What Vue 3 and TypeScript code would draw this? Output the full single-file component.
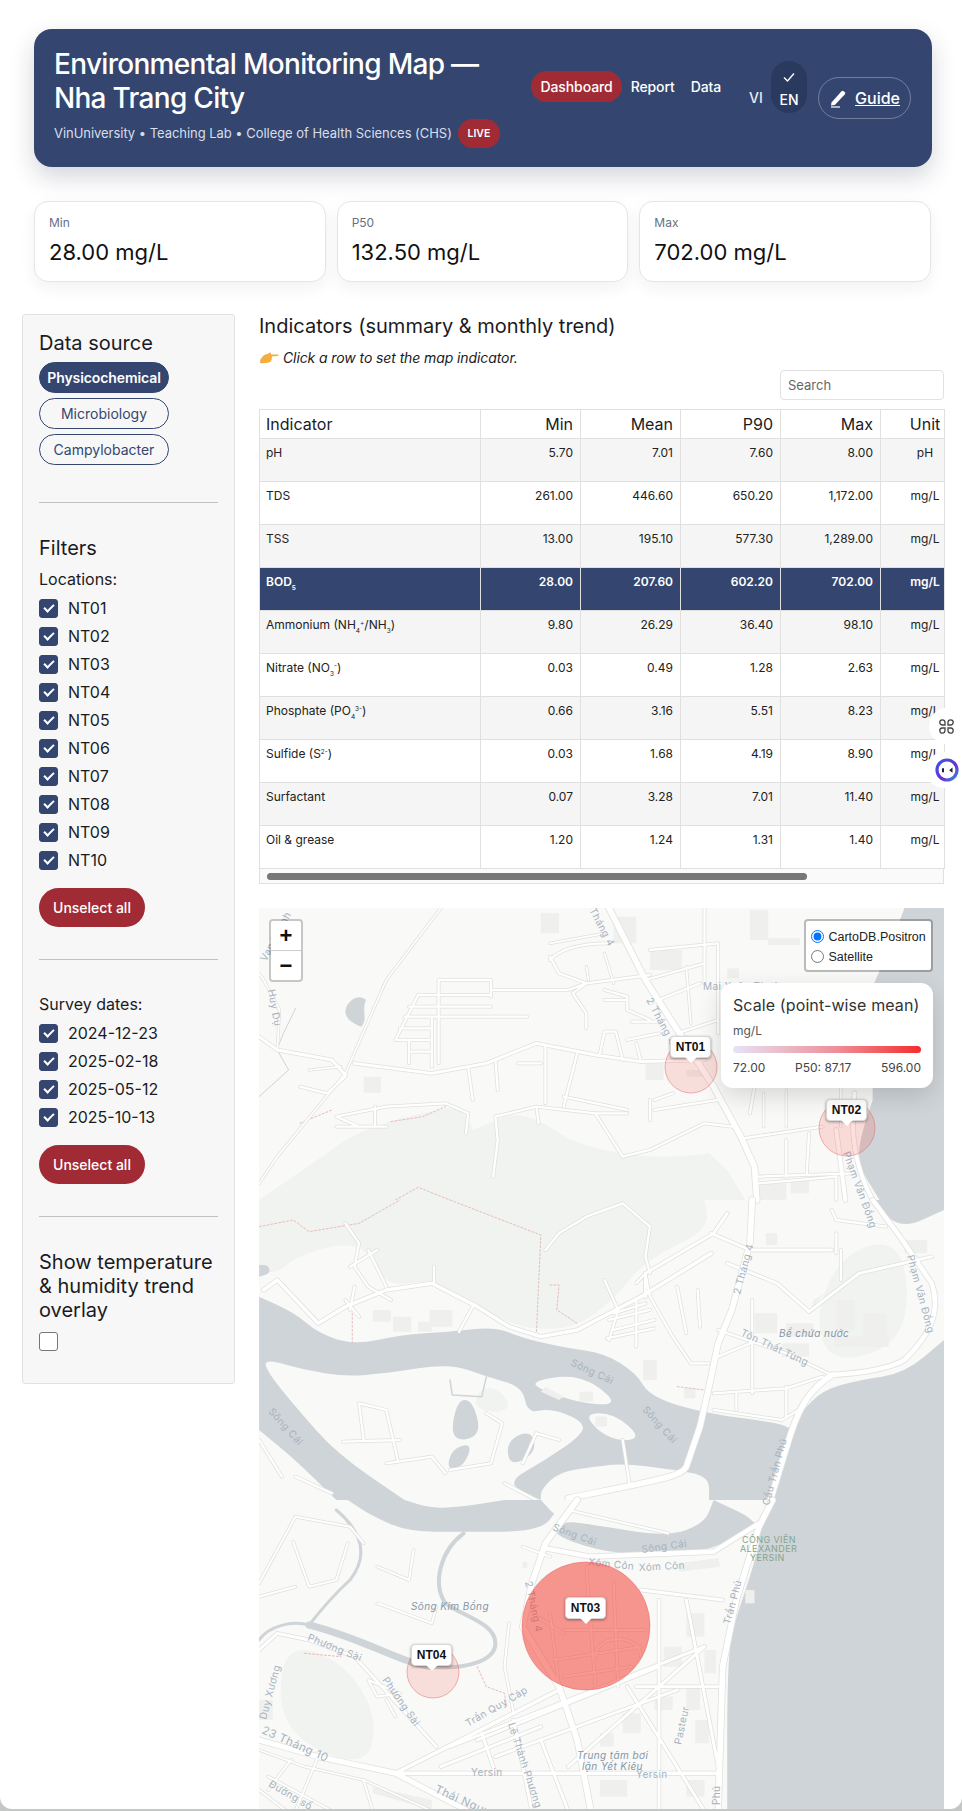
<template>
  <div class="page">
    <header class="hero">
      <div class="hero-left">
        <h1>Environmental Monitoring Map — Nha Trang City</h1>
        <div class="hero-sub">
          <span>VinUniversity • Teaching Lab • College of Health Sciences (CHS)</span>
          <span class="live">LIVE</span>
        </div>
      </div>
      <nav class="nav">
        <a class="nav-item active">Dashboard</a>
        <a class="nav-item">Report</a>
        <a class="nav-item">Data</a>
      </nav>
      <div class="lang">
        <span class="lang-vi">VI</span>
        <span class="lang-en">
          <svg width="14" height="14" viewBox="0 0 14 14" fill="none" stroke="#fff" stroke-width="1.4">
            <path d="M2 7.5 L5.5 11 L12 3.5" />
          </svg>
          <span>EN</span>
        </span>
      </div>
      <a class="guide">
        <svg width="20" height="20" viewBox="0 0 20 20">
          <path d="M2.5 14.5 L12.5 3.2 Q13.5 2.2 14.7 3.2 L15.8 4.3 Q16.6 5.4 15.7 6.4 L5.8 17 L2 17.6 Z" fill="#fff" />
          <path d="M2 19 H11" stroke="#fff" stroke-width="1.2" />
        </svg>
        <span>Guide</span>
      </a>
    </header>

    <section class="stats">
      <div v-for="s in stats" :key="s.label" class="stat">
        <div class="stat-label">{{ s.label }}</div>
        <div class="stat-value">{{ s.value }}</div>
      </div>
    </section>

    <div class="layout">
      <aside class="side">
        <h3>Data source</h3>
        <div class="sources">
          <button v-for="(src, i) in sources" :key="src" class="source" :class="{ on: i === 0 }">{{ src }}</button>
        </div>
        <hr class="first-rule" />
        <h3>Filters</h3>
        <div class="field-label">Locations:</div>
        <label v-for="loc in locations" :key="loc" class="check">
          <input type="checkbox" checked />
          <span>{{ loc }}</span>
        </label>
        <button class="unselect">Unselect all</button>
        <hr />
        <div class="field-label dates-label">Survey dates:</div>
        <label v-for="d in dates" :key="d" class="check">
          <input type="checkbox" checked />
          <span>{{ d }}</span>
        </label>
        <button class="unselect">Unselect all</button>
        <hr />
        <h3 class="overlay-title">Show temperature &amp; humidity trend overlay</h3>
        <input class="plain-check" type="checkbox" />
      </aside>

      <main class="content">
        <h2>Indicators (summary &amp; monthly trend)</h2>
        <p class="hint">
          <svg width="20" height="13" viewBox="0 0 20 13">
            <path d="M1 9 L4.5 4.5 Q6 3 8.5 3 L11 1.5 Q12.5 1.5 12 3.4 L19.5 3.6 Q20 4.6 19 5 L13 5.4 L12.6 9 Q12 11.5 9 11.8 L3.5 12.2 Z" fill="#f4ae3c" />
            <path d="M1 9 L3.5 12.2 L1.6 12 Z" fill="#e58f25" />
          </svg>
          <em>Click a row to set the map indicator.</em>
        </p>
        <div class="search-row"><input class="search" placeholder="Search" /></div>

        <div class="table-wrap">
          <table>
            <colgroup>
              <col style="width: 221px" />
              <col v-for="n in 4" :key="n" style="width: 100px" />
              <col style="width: 64px" />
            </colgroup>
            <thead>
              <tr>
                <th class="name">Indicator</th>
                <th>Min</th>
                <th>Mean</th>
                <th>P90</th>
                <th>Max</th>
                <th>Unit</th>
              </tr>
            </thead>
            <tbody>
              <tr v-for="(r, i) in rows" :key="i" :class="{ odd: i % 2 === 0, selected: r.selected }">
                <td class="name" v-html="r.name"></td>
                <td>{{ r.min }}</td>
                <td>{{ r.mean }}</td>
                <td>{{ r.p90 }}</td>
                <td>{{ r.max }}</td>
                <td>{{ r.unit }}</td>
              </tr>
            </tbody>
          </table>
          <div class="scroll-track"><div class="scroll-thumb"></div></div>
        </div>

        <div class="map">
          <svg class="map-svg" width="685" height="901" viewBox="259 908 685 901">
            <rect x="259" y="908" width="685" height="901" fill="#f9f9f8" />
            <g v-for="sec in sections" :key="sec.y" :transform="`translate(250 ${sec.y}) scale(0.4545 0.3333)`">
              <path v-for="(d, i) in sec.parks" :key="'p' + i" :d="smooth(d)" fill="#f0f3f0" />
              <path v-for="(d, i) in sec.water" :key="'w' + i" :d="smooth(d)" fill="#cfd4d8" />
              <path v-for="(d, i) in sec.land" :key="'l' + i" :d="smooth(d)" fill="#f9f9f8" />
              <path v-for="(d, i) in sec.ponds" :key="'o' + i" :d="smooth(d)" fill="#cfd4d8" />
              <path v-for="(d, i) in sec.greens" :key="'g' + i" :d="smooth(d)" fill="#f0f3f0" />
              <path v-for="(r, i) in sec.streams" :key="'s' + i" :d="r.d" class="line" stroke="#cfd4d8" :stroke-width="r.w" />
              <path v-for="(d, i) in sec.blocks" :key="'b' + i" :d="d" fill="#efefed" />
              <path v-for="(d, i) in sec.dotted" :key="'t' + i" :d="d" class="line" stroke="#e8bcbc" stroke-width="1" stroke-dasharray="2 2" />
              <path v-for="(r, i) in sec.roads" :key="'c' + i" :d="r.d" class="line" stroke="#e0e0de" :stroke-width="r.w * 1.15 + 1.5" />
              <path v-for="(r, i) in sec.roads" :key="'r' + i" :d="r.d" class="line" stroke="#ffffff" :stroke-width="r.w * 1.15" />
            </g>
            <text
              v-for="l in labels"
              :key="l.t + l.x"
              class="map-label"
              :class="l.cls"
              :transform="`translate(${l.x} ${l.y}) rotate(${l.r ?? 0})`"
            >{{ l.t }}</text>
            <circle
              v-for="m in markers"
              :key="m.id"
              :cx="m.cx"
              :cy="m.cy"
              :r="m.r"
              fill="#f44336"
              :fill-opacity="m.alpha"
              stroke="#e06666"
              stroke-opacity="0.7"
              stroke-width="0.7"
            />
          </svg>

          <div
            v-for="m in markers"
            :key="m.id"
            class="tip"
            :style="{ left: m.tx - 259 + 'px', top: m.ty - 908 + 'px' }"
          >{{ m.id }}</div>

          <div class="zoom-ctl">
            <a>+</a>
            <a>−</a>
          </div>
          <div class="layers">
            <label><input type="radio" name="base" checked /> CartoDB.Positron</label>
            <label><input type="radio" name="base" /> Satellite</label>
          </div>
          <div class="legend">
            <div class="legend-title">Scale (point-wise mean)</div>
            <div class="legend-unit">mg/L</div>
            <div class="legend-bar"></div>
            <div class="legend-scale">
              <span>72.00</span>
              <span>P50: 87.17</span>
              <span>596.00</span>
            </div>
          </div>
        </div>
      </main>
    </div>

    <div class="float-btn float-cmd">
      <svg width="17" height="17" viewBox="0 0 17 17" fill="none" stroke="#444" stroke-width="1.3">
        <path d="M7 7 H4.2 A2.6 2.6 0 1 1 7 4.2 Z M10 7 H12.8 A2.6 2.6 0 1 0 10 4.2 Z M7 10 H4.2 A2.6 2.6 0 1 0 7 12.8 Z M10 10 H12.8 A2.6 2.6 0 1 1 10 12.8 Z" />
      </svg>
    </div>
    <div class="float-btn float-bot">
      <svg width="24" height="24" viewBox="0 0 24 24">
        <defs>
          <linearGradient id="botRing" x1="0" y1="0" x2="1" y2="1">
            <stop offset="0" stop-color="#3a56e8" />
            <stop offset="0.6" stop-color="#6a2fd6" />
            <stop offset="1" stop-color="#2f8fe0" />
          </linearGradient>
        </defs>
        <circle cx="12" cy="12" r="10" fill="#fff" stroke="url(#botRing)" stroke-width="3.2" />
        <rect x="7" y="10" width="2" height="4.4" rx="1" fill="#1c1c3a" />
        <path d="M17.5 9.6 L14.2 12.2 L17.5 14.8 Z" fill="#1c1c3a" />
      </svg>
    </div>
  </div>
</template>

<script setup lang="ts">
interface Stroke {
  d: string;
  w: number;
}

interface MapSection {
  y: number;
  parks: string[];
  water: string[];
  land: string[];
  ponds: string[];
  greens: string[];
  streams: Stroke[];
  blocks: string[];
  dotted: string[];
  roads: Stroke[];
}

interface MapLabel {
  t: string;
  x: number;
  y: number;
  r?: number;
  cls?: string;
}

const stats = [
  { label: 'Min', value: '28.00 mg/L' },
  { label: 'P50', value: '132.50 mg/L' },
  { label: 'Max', value: '702.00 mg/L' },
];

const sources = ['Physicochemical', 'Microbiology', 'Campylobacter'];
const locations = ['NT01', 'NT02', 'NT03', 'NT04', 'NT05', 'NT06', 'NT07', 'NT08', 'NT09', 'NT10'];
const dates = ['2024-12-23', '2025-02-18', '2025-05-12', '2025-10-13'];

const rows = [
  { name: 'pH', min: '5.70', mean: '7.01', p90: '7.60', max: '8.00', unit: 'pH' },
  { name: 'TDS', min: '261.00', mean: '446.60', p90: '650.20', max: '1,172.00', unit: 'mg/L' },
  { name: 'TSS', min: '13.00', mean: '195.10', p90: '577.30', max: '1,289.00', unit: 'mg/L' },
  { name: 'BOD<sub>5</sub>', min: '28.00', mean: '207.60', p90: '602.20', max: '702.00', unit: 'mg/L', selected: true },
  { name: 'Ammonium (NH<sub>4</sub><sup>+</sup>/NH<sub>3</sub>)', min: '9.80', mean: '26.29', p90: '36.40', max: '98.10', unit: 'mg/L' },
  { name: 'Nitrate (NO<sub>3</sub><sup>-</sup>)', min: '0.03', mean: '0.49', p90: '1.28', max: '2.63', unit: 'mg/L' },
  { name: 'Phosphate (PO<sub>4</sub><sup>3-</sup>)', min: '0.66', mean: '3.16', p90: '5.51', max: '8.23', unit: 'mg/L' },
  { name: 'Sulfide (S<sup>2-</sup>)', min: '0.03', mean: '1.68', p90: '4.19', max: '8.90', unit: 'mg/L' },
  { name: 'Surfactant', min: '0.07', mean: '3.28', p90: '7.01', max: '11.40', unit: 'mg/L' },
  { name: 'Oil &amp; grease', min: '1.20', mean: '1.24', p90: '1.31', max: '1.40', unit: 'mg/L' },
];

const markers = [
  { id: 'NT01', cx: 691, cy: 1067, r: 26, alpha: 0.15, tx: 670, ty: 1036 },
  { id: 'NT02', cx: 847, cy: 1128, r: 28, alpha: 0.17, tx: 826, ty: 1099 },
  { id: 'NT03', cx: 586, cy: 1626, r: 64, alpha: 0.55, tx: 565, ty: 1597 },
  { id: 'NT04', cx: 433, cy: 1672, r: 26, alpha: 0.15, tx: 411, ty: 1644 },
];

// polygon chi co M/L/Z thi bo goc cho bo song, diem o mep khung giu nguyen
function smooth(d: string): string {
  if (!/^M[\d,\sL.-]+Z$/.test(d)) return d;
  const pts = d
    .replace(/[MZ]/g, '')
    .split('L')
    .map((p) => p.trim().split(',').map(Number));
  const onEdge = (p: number[]) => p[0] <= 20 || p[0] >= 1527 || p[1] <= 0 || p[1] >= 900;
  const mid = (a: number[], b: number[]) => `${(a[0] + b[0]) / 2},${(a[1] + b[1]) / 2}`;
  let out = `M${mid(pts[pts.length - 1], pts[0])}`;
  pts.forEach((p, i) => {
    const next = pts[(i + 1) % pts.length];
    out += onEdge(p) ? ` L${p[0]},${p[1]} L${mid(p, next)}` : ` Q${p[0]},${p[1]} ${mid(p, next)}`;
  });
  return out + ' Z';
}

// duong ve tinh theo toa do anh zoom, moi doan co goc rieng
const sections: MapSection[] = [
  {
    y: 900,
    parks: [
      'M20,900 L180,750 C220,700 320,650 420,630 C460,610 480,650 490,690 L560,650 C620,630 660,690 710,720 C800,770 900,780 1010,760 L1050,810 L1090,900 Z',
    ],
    water: [
      'M1440,24 C1420,100 1390,200 1370,260 L1370,600 C1350,680 1330,760 1345,810 L1385,900 L1527,900 L1527,24 Z',
      'M210,330 C215,300 240,280 255,300 C245,330 260,360 245,380 C225,370 208,355 210,330 Z',
    ],
    land: [],
    ponds: [],
    greens: [],
    streams: [
      { d: 'M20,590 L85,510 L60,450', w: 1 },
      { d: 'M60,450 C70,400 90,360 100,325', w: 1 },
    ],
    blocks: [
      'M250,530 h38 v48 h-38 z',
      'M640,40 h40 v60 h-40 z',
      'M1050,205 h26 v30 h-26 z',
      'M1100,30 h40 v90 h-40 z',
      'M1140,115 h70 v20 h-70 z',
      'M880,150 h70 v60 h-70 z',
      'M870,490 h40 v50 h-40 z',
      'M1120,850 h60 v50 h-60 z',
      'M1190,840 h40 v40 h-40 z',
      'M960,510 h40 v20 h-40 z',
      'M800,50 h50 v80 h-50 z',
    ],
    dotted: ['M320,900 L370,862 L440,900', 'M110,670 L180,630 M310,665 L380,650 L430,620'],
    roads: [
      { d: 'M790,24 L870,240 L1020,560 L1080,710 L1110,800 L1115,900', w: 5 },
      { d: 'M420,24 L300,240 L210,520 L60,770 L20,850', w: 1.5 },
      { d: 'M415,240 H530 M415,240 V490 M530,240 V290 M370,285 H530 M370,285 L320,420 M350,320 H530 M340,350 H610 M330,385 H400 M325,420 H400 M350,455 H400 M350,490 V420 M400,350 V500', w: 2 },
      { d: 'M20,410 L60,450 L180,480 L210,525 M230,490 L400,520 L520,490 L630,430 L760,465 L860,485 L1000,480', w: 2.5 },
      { d: 'M530,270 L700,270 L740,250 L880,225 M740,250 L710,280 L740,340 V385 M660,170 L680,220 L740,250 M790,130 C720,130 680,150 660,180', w: 2 },
      { d: 'M880,150 L1030,130 M870,240 L1000,190 M940,400 L1030,360 M880,310 L990,250 M1000,24 V250 M1030,130 V400', w: 2 },
      { d: 'M780,270 L830,290 L830,330 L880,360 M780,300 H830 M780,395 L805,395 L820,480 M770,460 L780,395 M840,365 H900 M830,420 L900,400 M850,430 L860,485', w: 2 },
      { d: 'M110,560 L170,580 L210,530 M190,650 L300,620 L430,610 L480,640 L475,700 M190,650 L240,680 M190,680 L300,680 M275,620 V680', w: 2 },
      { d: 'M540,650 L630,620 L760,640 L830,640 M540,650 L545,720 L535,830 M690,590 L830,630 M720,460 L690,620 M650,440 L650,610 M480,500 L490,600 M540,480 L545,570 M590,490 H640 M630,620 L635,670', w: 2 },
      { d: 'M880,600 V660 M890,600 L930,580 M890,630 L1030,600 M760,640 L820,770 L880,750 L1000,670 L1060,680', w: 2 },
      { d: 'M1085,715 L1260,680 M1110,830 L1330,820 M1120,850 L1290,830 V900 M1180,720 V830 M1230,700 L1225,820 M1100,640 L1110,560', w: 2 },
      { d: 'M1290,690 L1310,900 M1330,580 C1320,700 1330,800 1370,900', w: 3.5 },
      { d: 'M660,130 L780,100 M740,200 L745,240 M780,160 L800,250 M960,200 L970,370 M1130,580 V680 M1180,570 V680 M1300,560 V680', w: 1.5 },
      { d: 'M60,450 L65,330 L30,240 L20,220 M130,510 L200,500', w: 1.5 },
    ],
  },
  {
    y: 1200,
    parks: [
      'M20,0 L1000,0 L1010,90 L870,180 L800,300 L720,380 L640,390 L570,370 L490,310 L400,240 L300,260 L260,150 L200,130 L100,170 L60,220 L20,210 Z',
    ],
    water: [
      'M20,290 L100,340 L150,400 L230,435 L330,405 L440,395 L540,380 L600,415 L700,445 L780,460 L850,520 L880,590 L1000,640 L1170,670 L1190,690 L1210,640 L1260,570 L1340,540 L1440,520 L1527,420 L1527,900 L20,900 Z',
      'M1370,0 L1430,90 L1527,30 L1527,0 Z',
      'M20,195 L40,195 L45,220 L20,230 Z',
    ],
    land: [
      'M30,475 L120,510 L210,530 L300,520 L440,490 L520,530 L600,560 L610,640 L660,625 L730,660 L735,700 L650,780 L560,850 L640,900 L340,900 L190,760 L100,620 L40,520 Z',
      'M620,545 L700,525 L760,550 L810,615 L730,610 L640,570 Z',
      'M735,640 L800,640 L860,710 L820,725 L770,700 Z',
      'M640,870 L680,815 L760,800 L820,790 L940,810 L1010,830 L1010,900 L640,900 Z',
      'M20,690 L100,780 L190,900 L20,900 Z',
    ],
    ponds: [
      'M455,600 L490,600 L510,710 L440,725 Z',
      'M445,745 L490,730 L470,800 L432,810 Z',
      'M565,720 L620,690 L630,760 L570,800 Z',
    ],
    greens: ['M510,560 L550,570 L575,620 L540,640 L490,620 Z', 'M1310,150 L1440,120 L1450,420 L1280,500 L1240,340 Z'],
    streams: [{ d: 'M440,540 L445,585 L510,590 L520,530', w: 1.5 }],
    blocks: [
      'M270,330 h40 v35 h-40 z',
      'M315,350 h40 v45 h-40 z',
      'M395,330 h50 v50 h-50 z',
      'M370,365 h30 v30 h-30 z',
      'M650,560 L690,590 L680,600 L640,575 Z',
      'M725,575 h30 v30 h-30 z',
      'M760,650 h25 v30 h-25 z',
      'M865,480 h30 v60 h-30 z',
      'M1290,300 h40 v90 h-40 z',
      'M1350,340 h50 v90 h-50 z',
      'M1110,340 h50 v60 h-50 z',
      'M1180,370 h60 v40 h-60 z',
      'M1285,410 h120 v30 h-120 z',
      'M1170,430 h60 v40 h-60 z',
      'M1135,100 h25 v35 h-25 z',
      'M1240,300 L1265,280 L1235,325 Z',
      'M955,565 h25 v30 h-25 z',
      'M1440,120 h50 v40 h-50 z',
    ],
    dotted: ['M20,80 L95,60 L130,95 L240,70 L330,0 M440,0 L640,105 L630,400', 'M660,255 L680,255 L675,330 L720,370', 'M225,340 L225,430 M940,560 L1000,570'],
    roads: [
      { d: 'M1105,0 L1100,130 L1060,330 L1030,430 L1010,560 L990,680 L960,800 C950,830 900,840 700,895', w: 5 },
      { d: 'M1280,525 C1230,570 1210,620 1190,700 L1145,900', w: 5 },
      { d: 'M1370,0 L1430,110 L1500,250 C1520,330 1500,400 1440,480 C1400,510 1340,520 1280,525', w: 4 },
      { d: 'M30,270 L60,240 L150,370 L210,320 L300,270 L400,250 L500,320 L570,380 L640,410 L720,390 L860,290 L1015,160', w: 3 },
      { d: 'M1015,100 L1100,150 L1280,150 M1020,100 L870,220 L870,290 M1020,100 L1050,40 M1050,190 L1160,250 L1230,335 L1340,220 L1500,170', w: 2.5 },
      { d: 'M780,240 L810,330 L790,420 M850,250 L870,220 L880,290 L930,410 L970,490 L1010,490 M800,340 L870,310 M790,360 L880,330 M800,390 L890,360 M785,415 L890,385 M850,300 V440', w: 2 },
      { d: 'M210,70 L240,130 L230,200 L260,260 L310,300 M650,150 L680,100 L740,50 L820,10 L880,80 L870,170 L880,220 M210,300 L240,350 M260,150 L300,260 M220,200 L280,150 M230,260 L220,330 M405,200 V250', w: 2 },
      { d: 'M1030,390 L1180,460 L1280,525 M1030,470 L1100,430 M1020,580 L1180,565 L1260,530 M1020,630 L1170,660 L1220,620 M1070,580 V630 M1180,560 V650 M940,260 L960,400 M985,270 L990,380 M1105,300 V580 M1290,100 L1290,160 M1280,30 L1290,60 L1400,80 M1300,240 V150', w: 2 },
      { d: 'M240,610 L300,630 L325,780 M240,610 L250,720 M205,725 L330,720 M300,790 L400,770 L430,820 M520,640 L555,670 L530,790 L440,810 M630,700 L680,720 M630,700 L600,790 M820,720 L835,850 M20,720 L70,830 M100,830 L180,880 M560,850 L630,900', w: 2 },
      { d: 'M490,320 L460,395', w: 2 },
    ],
  },
  {
    y: 1500,
    parks: ['M80,430 L200,480 L280,640 L260,800 L120,740 L60,620 Z'],
    water: [
      'M215,0 L270,50 L350,95 L470,95 L640,95 L680,20 L720,0 Z',
      'M660,100 L760,150 L880,170 L1020,150 L1120,70 L1150,0 L1527,0 L1527,933 L1050,933 L1050,450 L1075,330 L1110,190 L1130,70 L1020,0 L1000,70 L920,110 L780,80 L690,60 Z',
    ],
    land: ['M640,0 L1010,0 L1005,60 L930,100 L780,80 L680,60 Z', 'M340,0 L560,0 L470,20 L400,25 Z'],
    ponds: [],
    greens: [],
    streams: [
      { d: 'M470,100 C420,150 400,250 430,310 C470,350 540,370 540,430 C540,480 480,510 400,500', w: 4 },
      { d: 'M400,500 C330,490 260,420 130,375', w: 7 },
      { d: 'M130,375 C90,360 40,380 20,420', w: 3 },
      { d: 'M190,30 C250,100 260,170 220,240 C180,290 150,340 130,375', w: 3 },
    ],
    blocks: [
      'M940,190 L1030,175 L1035,200 L945,215 Z',
      'M960,340 h40 v70 h-40 z',
      'M910,440 h40 v60 h-40 z',
      'M1000,450 h25 v70 h-25 z',
      'M960,560 h30 v70 h-30 z',
      'M890,590 h40 v40 h-40 z',
      'M770,700 h30 v40 h-30 z',
      'M980,660 h30 v70 h-30 z',
      'M820,640 h40 v60 h-40 z',
      'M770,840 h60 v50 h-60 z',
      'M960,840 h40 v50 h-40 z',
      'M1090,270 h20 v40 h-20 z',
      'M270,860 L400,900 L400,930 L270,880 Z',
      'M600,185 h10 v20 h-10 z',
      'M20,600 h30 v60 h-30 z',
    ],
    dotted: ['M500,500 L520,560 L560,580 L565,620', 'M120,460 L200,470'],
    roads: [
      { d: 'M720,0 L650,130 L620,250 L600,380 L680,560 L720,720 L750,933', w: 5 },
      { d: 'M1150,0 L1120,80 L1070,300 L1040,500 L1030,933', w: 5 },
      { d: 'M650,145 L750,170 L1020,155 L1120,70', w: 4 },
      { d: 'M20,720 L150,770 L320,820 L480,933', w: 4.5 },
      { d: 'M20,750 L120,800 L250,840 L400,933', w: 1.5 },
      { d: 'M320,820 L680,570 M320,820 L1030,820', w: 3 },
      { d: 'M130,420 L230,470 L410,740 M60,400 L20,450 M60,400 L130,420', w: 2.5 },
      { d: 'M440,740 L1000,440 M500,720 L900,500 M540,770 L940,570 M420,800 L640,680', w: 2.5 },
      { d: 'M830,560 L1000,933 M1000,440 L700,800 M900,300 V933 M960,300 L1030,800 M1000,560 H850 M640,720 L700,933 M580,660 L620,933 M510,700 L540,820 M1030,560 H900 M860,270 L1040,300', w: 2.5 },
      { d: 'M680,560 L660,340 M690,390 H870 M740,200 L760,560 M800,250 L810,560 M670,480 L860,440 M690,530 L840,500 M760,470 C760,400 860,400 860,470 M620,340 L690,400', w: 1.8 },
      { d: 'M95,125 L130,260 L190,240 L215,130 M100,260 L20,290 M280,200 L350,240 L360,150 M280,310 L400,370 L410,320 M260,540 L330,580 L280,590 Z M300,600 L320,650 M600,140 L660,170 M570,370 L560,500 L580,640', w: 1.8 },
      { d: 'M40,830 L180,933 M20,870 L80,933 M150,770 L100,933 M90,780 L40,870 M250,840 L270,933', w: 1.8 },
      { d: 'M20,250 L100,50 L220,80 L250,130 M700,30 L920,100', w: 1.8 },
    ],
  },
];

const labels: MapLabel[] = [
  { t: 'Tháng 4', x: 589, y: 910, r: 62 },
  { t: '2 Tháng 4', x: 646, y: 1000, r: 62 },
  { t: 'Huy Dụ', x: 268, y: 990, r: 80 },
  { t: 'Vạn Thạnh', x: 266, y: 962, r: -62 },
  { t: 'Mai Xuân Thưởng', x: 703, y: 990 },
  { t: 'Phạm Văn Đồng', x: 843, y: 1153, r: 70 },
  { t: 'Phạm Văn Đồng', x: 907, y: 1256, r: 75 },
  { t: '2 Tháng 4', x: 740, y: 1295, r: -75 },
  { t: 'Tôn Thất Tùng', x: 740, y: 1335, r: 25 },
  { t: 'Bể chứa nước', x: 779, y: 1337, cls: 'italic' },
  { t: 'Sông Cái', x: 570, y: 1365, r: 25 },
  { t: 'Sông Cái', x: 642, y: 1410, r: 48 },
  { t: 'Sông Cái', x: 268, y: 1412, r: 48 },
  { t: 'Sông Cái', x: 552, y: 1530, r: 20 },
  { t: 'Sông Cái', x: 642, y: 1553, r: -8 },
  { t: 'Cầu Trần Phú', x: 769, y: 1506, r: -75 },
  { t: 'Trần Phú', x: 730, y: 1625, r: -75 },
  { t: 'Xóm Côn', x: 588, y: 1565, r: 6 },
  { t: 'Xóm Côn', x: 639, y: 1571, r: -3 },
  { t: 'CÔNG VIÊN', x: 742, y: 1543, cls: 'park' },
  { t: 'ALEXANDER', x: 740, y: 1552, cls: 'park' },
  { t: 'YERSIN', x: 750, y: 1561, cls: 'park' },
  { t: 'Sông Kim Bồng', x: 411, y: 1610, cls: 'italic' },
  { t: 'Phương Sài', x: 307, y: 1640, r: 22 },
  { t: 'Phương Sài', x: 382, y: 1680, r: 55 },
  { t: 'Duy Xương', x: 266, y: 1720, r: -75 },
  { t: '2 Tháng 4', x: 525, y: 1582, r: 78 },
  { t: 'Trần Quy Cáp', x: 468, y: 1727, r: -30 },
  { t: 'Lê Thành Phương', x: 508, y: 1724, r: 72 },
  { t: '23 Tháng 10', x: 261, y: 1733, r: 24, cls: 'big' },
  { t: 'Thái Nguyên', x: 434, y: 1792, r: 24, cls: 'big' },
  { t: 'Đường số', x: 268, y: 1786, r: 30 },
  { t: 'Yersin', x: 471, y: 1776 },
  { t: 'Yersin', x: 636, y: 1778 },
  { t: 'Trung tâm bơi', x: 577, y: 1759, cls: 'italic' },
  { t: 'lặn Yết Kiêu', x: 582, y: 1770, cls: 'italic' },
  { t: 'Pasteur', x: 681, y: 1745, r: -78 },
  { t: 'Phú', x: 720, y: 1805, r: -90 },
];
</script>

<style>
html,
body {
  background: #c4c7c6;
}
</style>

<style scoped>
.page {
  position: relative;
  height: 1809px;
  overflow: hidden;
  padding-top: 29px;
  box-sizing: border-box;
  background: #fff;
  border-radius: 0 0 12px 12px;
  font-family: Inter, 'Noto Sans', sans-serif;
  color: #1b1b1f;
}

.hero {
  display: flex;
  align-items: center;
  height: 138px;
  margin: 0 30px 0 34px;
  padding-left: 20px;
  box-sizing: border-box;
  background: #34466f;
  border-radius: 18px;
  color: #fff;
  box-shadow: 0 10px 24px rgba(20, 30, 60, 0.18);
}

.hero-left {
  flex: 0 0 477px;
  margin-top: -2px;
}

.hero h1 {
  margin: 0;
  max-width: 440px;
  font-size: 28px;
  line-height: 34px;
  font-weight: 500;
  letter-spacing: -0.7px;
}

.hero-sub {
  display: flex;
  align-items: center;
  gap: 6px;
  margin-top: 4px;
  font-size: 13px;
  letter-spacing: -0.04px;
  color: #d8deea;
}

.live {
  display: flex;
  align-items: center;
  justify-content: center;
  width: 42px;
  height: 29px;
  border-radius: 15px;
  background: #a02b35;
  color: #fff;
  font-size: 10.5px;
  font-weight: 600;
}

.nav {
  display: flex;
  margin-bottom: 23px;
}

.nav-item {
  padding: 7px 8px;
  border-radius: 16px;
  font-size: 14px;
  line-height: 17px;
  font-weight: 500;
  letter-spacing: -0.1px;
}

.nav-item.active {
  padding: 7px 9.5px;
  margin-right: 0.5px;
  background: #a02b35;
}

.lang {
  display: flex;
  align-items: flex-end;
  margin: 0 0 22px 20px;
  font-size: 14px;
  font-weight: 500;
}

.lang-vi {
  width: 22px;
  padding-bottom: 7px;
  line-height: 17px;
  color: #e8ecf4;
}

.lang-en {
  display: flex;
  flex-direction: column;
  align-items: center;
  width: 36px;
  height: 52px;
  box-sizing: border-box;
  padding-top: 9px;
  border-radius: 18px;
  background: #2a3a5f;
}

.lang-en span {
  margin-top: 7px;
  line-height: 17px;
}

.guide {
  display: flex;
  align-items: center;
  gap: 6px;
  width: 93px;
  height: 42px;
  box-sizing: border-box;
  margin-left: 11px;
  padding-left: 10px;
  border: 1px solid rgba(255, 255, 255, 0.3);
  border-radius: 21px;
  font-size: 16px;
  font-weight: 500;
  text-decoration: underline;
}

.stats {
  display: grid;
  grid-template-columns: repeat(3, 1fr);
  gap: 11px;
  margin: 34px 31px 0 34px;
}

.stat {
  height: 81px;
  box-sizing: border-box;
  padding: 13px 14px;
  background: #fff;
  border: 1px solid #e4e5ea;
  border-radius: 14px;
  box-shadow: 0 6px 16px rgba(20, 30, 60, 0.06);
}

.stat-label {
  font-size: 12px;
  line-height: 16px;
  color: #667085;
}

.stat-value {
  margin-top: 6px;
  font-size: 22px;
  line-height: 30px;
  color: #111;
}

.layout {
  display: flex;
  gap: 24px;
  margin: 32px 18px 0 22px;
}

.side {
  flex: 0 0 213px;
  align-self: flex-start;
  height: 1070px;
  box-sizing: border-box;
  padding: 16px 16px 0 16px;
  background: #f7f7f8;
  border: 1px solid #e2e2e2;
  border-radius: 3px;
}

.side h3 {
  margin: 0;
  font-size: 20px;
  line-height: 24px;
  font-weight: 400;
}

.side hr {
  height: 1px;
  margin: 32px 0 0;
  border: 0;
  background: #c2c2c4;
}

.side .first-rule {
  margin: 37px 0 33px;
}

.sources {
  display: flex;
  flex-direction: column;
  align-items: flex-start;
  gap: 5px;
  margin-top: 7px;
}

.source {
  width: 130px;
  height: 31px;
  padding: 0;
  background: transparent;
  border: 1px solid #34466f;
  border-radius: 16px;
  color: #34466f;
  font: 400 14px Inter, sans-serif;
}

.source.on {
  background: #34466f;
  color: #fff;
  font-weight: 600;
  letter-spacing: -0.1px;
}

.field-label {
  margin-top: 9px;
  font-size: 16px;
  line-height: 20px;
}

.dates-label {
  margin-top: 34px;
}

.check {
  display: flex;
  align-items: center;
  gap: 10px;
  height: 28px;
  font-size: 16px;
}

.check input,
.plain-check {
  position: relative;
  appearance: none;
  width: 19px;
  height: 19px;
  margin: 0;
  box-sizing: border-box;
  background: #fff;
  border: 1px solid #767676;
  border-radius: 3px;
}

.check input:checked {
  background: #34466f;
  border-color: #34466f;
}

.check input:checked::after {
  content: '';
  position: absolute;
  left: 3.5px;
  top: 4px;
  width: 8px;
  height: 4px;
  border-left: 2.5px solid #fff;
  border-bottom: 2.5px solid #fff;
  transform: rotate(-45deg);
}

.side .field-label + .check {
  margin-top: 5px;
}

.unselect {
  display: block;
  width: 106px;
  height: 39px;
  margin-top: 14px;
  padding: 0;
  background: #a02b35;
  border: 0;
  border-radius: 20px;
  color: #fff;
  font: 500 14px Inter, sans-serif;
}

.overlay-title {
  margin-top: 33px !important;
}

.plain-check {
  display: block;
  margin-top: 10px;
}

.content {
  flex: 0 0 685px;
}

.content h2 {
  margin: 0;
  font-size: 20px;
  line-height: 24px;
  font-weight: 400;
}

.hint {
  display: flex;
  align-items: center;
  gap: 4px;
  margin: 11px 0 0;
  font-size: 14px;
  line-height: 17px;
  letter-spacing: -0.1px;
}

.search-row {
  display: flex;
  justify-content: flex-end;
  margin-top: 4px;
}

.search {
  width: 164px;
  height: 30px;
  box-sizing: border-box;
  padding: 0 7px;
  background: #fff;
  border: 1px solid #e2e2e2;
  border-radius: 4px;
  font: 13px Inter, sans-serif;
}

.search::placeholder {
  color: #666;
}

.table-wrap {
  width: 685px;
  margin-top: 9px;
  border-bottom: 1px solid #e0e0e0;
}

table {
  width: 685px;
  table-layout: fixed;
  border-collapse: collapse;
  font-size: 12px;
}

th,
td {
  padding: 6px 7px 0 6px;
  border: 1px solid #e0e0e0;
  text-align: right;
  vertical-align: top;
  overflow: hidden;
  white-space: nowrap;
}

th {
  height: 29px;
  box-sizing: border-box;
  padding-top: 4px;
  font-size: 16px;
  line-height: 20px;
  font-weight: 400;
}

th:last-child,
td:last-child {
  padding-left: 28px;
  padding-right: 3px;
  text-align: center;
}

td {
  height: 43px;
  box-sizing: border-box;
  line-height: 16px;
  color: #222;
}

.name {
  text-align: left;
}

tr.odd td {
  background: #f5f5f5;
}

tr.selected td {
  background: #34466f;
  color: #fff;
  font-weight: 600;
}

td :deep(sub) {
  font-size: 6.5px;
  line-height: 0;
  vertical-align: -4px;
}

td :deep(sup) {
  font-size: 6.5px;
  line-height: 0;
  vertical-align: 4px;
}

.scroll-track {
  height: 14px;
  padding: 4px 7px 0;
  box-sizing: border-box;
  background: #fafafa;
  border-left: 1px solid #e0e0e0;
  border-right: 1px solid #e0e0e0;
}

.scroll-thumb {
  width: 540px;
  height: 7px;
  border-radius: 4px;
  background: #777;
}

.map {
  position: relative;
  width: 685px;
  height: 901px;
  margin-top: 24px;
  overflow: hidden;
}

.map-svg {
  display: block;
}

.line {
  fill: none;
  stroke-linecap: round;
  stroke-linejoin: round;
  vector-effect: non-scaling-stroke;
}

.map-label {
  font-family: Inter, sans-serif;
  font-size: 10px;
  letter-spacing: 0.4px;
  fill: #a6b3be;
}

.map-label.italic {
  font-style: italic;
  fill: #8496a6;
}

.map-label.park {
  font-size: 9px;
  fill: #86a58c;
}

.map-label.big {
  font-size: 11.5px;
}

.tip {
  position: absolute;
  width: 41px;
  height: 22px;
  box-sizing: border-box;
  background: #fff;
  border: 1px solid #d8d8d8;
  border-radius: 4px;
  box-shadow: 0 1px 3px rgba(0, 0, 0, 0.4);
  font: bold 12px/20px 'Liberation Sans', Arial, sans-serif;
  color: #111;
  text-align: center;
}

.tip::after {
  content: '';
  position: absolute;
  left: 14px;
  bottom: -6px;
  border: 6px solid transparent;
  border-bottom: 0;
  border-top-color: #fff;
}

.zoom-ctl {
  position: absolute;
  left: 10px;
  top: 11px;
  width: 30px;
  border: 2px solid rgba(0, 0, 0, 0.2);
  border-radius: 4px;
  background: #fff;
  background-clip: padding-box;
}

.zoom-ctl a {
  display: block;
  height: 29px;
  font: bold 22px/29px 'Liberation Sans', Arial, sans-serif;
  color: #111;
  text-align: center;
}

.zoom-ctl a + a {
  border-top: 1px solid #ccc;
}

.layers {
  position: absolute;
  left: 545px;
  top: 11px;
  width: 129px;
  height: 53px;
  box-sizing: border-box;
  padding: 6px 5px;
  background: #fff;
  background-clip: padding-box;
  border: 2px solid rgba(0, 0, 0, 0.25);
  border-radius: 4px;
  font: 12.5px/20px 'Liberation Sans', Arial, sans-serif;
  color: #222;
}

.layers label {
  display: block;
  white-space: nowrap;
}

.layers input {
  width: 13px;
  height: 13px;
  margin: 0 1px 0 0;
  vertical-align: -2px;
}

.legend {
  position: absolute;
  left: 462px;
  top: 75px;
  width: 212px;
  height: 105px;
  box-sizing: border-box;
  padding: 12px 12px;
  background: #fff;
  border-radius: 12px;
  box-shadow: 0 8px 24px rgba(0, 0, 0, 0.14);
  color: #333;
}

.legend-title {
  font-size: 16px;
  line-height: 20px;
  letter-spacing: 0.1px;
  white-space: nowrap;
}

.legend-unit {
  margin-top: 8px;
  font-size: 12px;
  line-height: 15px;
  color: #555;
}

.legend-bar {
  height: 7px;
  margin-top: 8px;
  border-radius: 4px;
  background: linear-gradient(90deg, #e6e3f7, #ee8f97 55%, #f42c2c);
}

.legend-scale {
  display: flex;
  justify-content: space-between;
  margin-top: 7px;
  font-size: 12px;
  line-height: 15px;
  color: #444;
}

.float-btn {
  position: absolute;
  display: flex;
  align-items: center;
  background: #fff;
  border-radius: 18px 0 0 18px;
  right: 0;
  height: 36px;
}

.float-cmd {
  top: 708px;
  width: 33px;
  padding-left: 9px;
  box-sizing: border-box;
}

.float-bot {
  top: 752px;
  width: 36px;
  padding-left: 9px;
  box-sizing: border-box;
}
</style>
